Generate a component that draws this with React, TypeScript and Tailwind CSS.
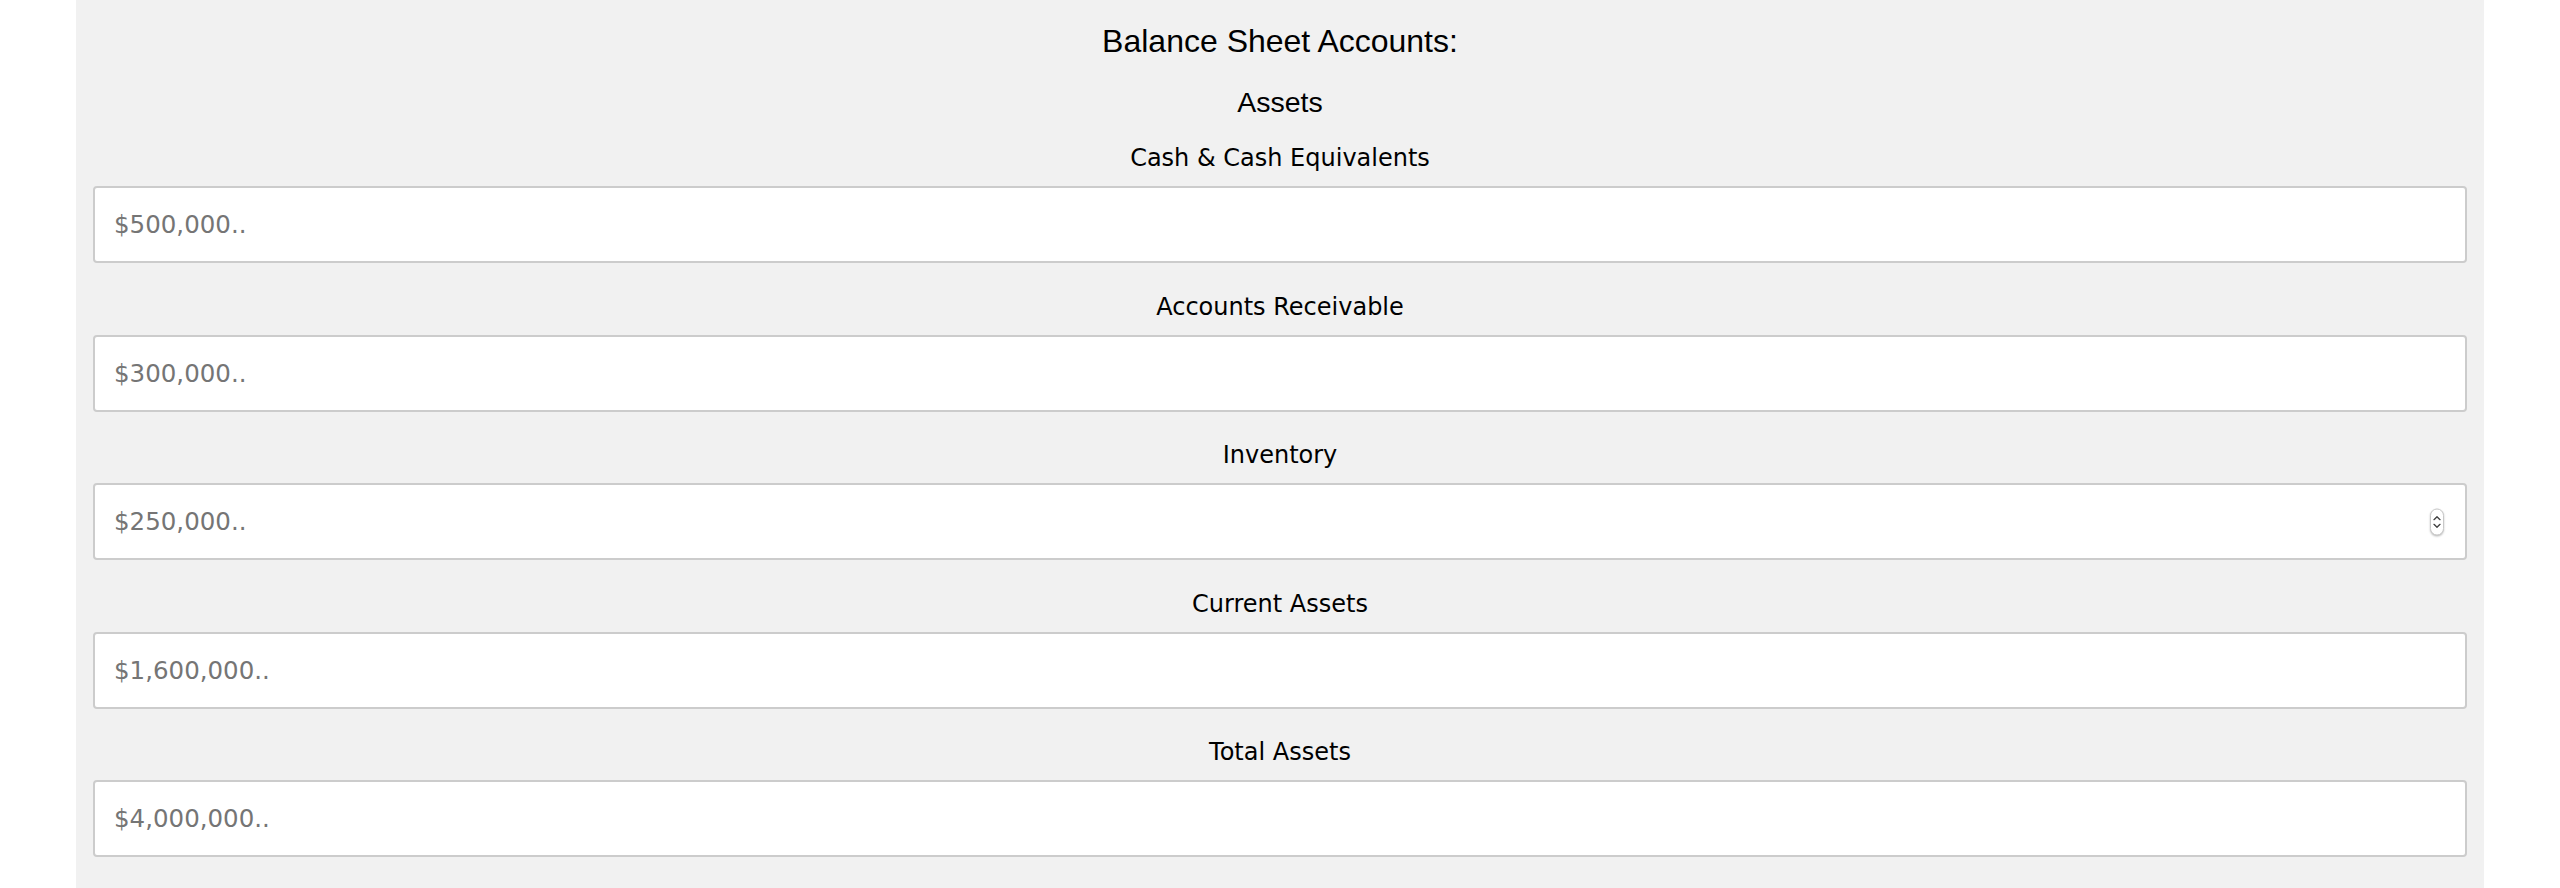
import React from "react";

const fields = [
  { label: "Cash & Cash Equivalents", placeholder: "$500,000..", spinner: false },
  { label: "Accounts Receivable", placeholder: "$300,000..", spinner: false },
  { label: "Inventory", placeholder: "$250,000..", spinner: true },
  { label: "Current Assets", placeholder: "$1,600,000..", spinner: false },
  { label: "Total Assets", placeholder: "$4,000,000..", spinner: false },
];

function Spinner() {
  return (
    <div className="absolute right-[23px] top-1/2 -translate-y-1/2 w-[14px] h-[27px] rounded-full border border-[#c8c8c8] bg-white shadow-[0_1px_2px_rgba(0,0,0,0.25)] flex flex-col items-center justify-center gap-[3px]">
      <svg width="8" height="5" viewBox="0 0 8 5" fill="none">
        <path d="M1 4.2 L4 1.2 L7 4.2" stroke="#444" strokeWidth="1.4" strokeLinecap="round" strokeLinejoin="round" />
      </svg>
      <svg width="8" height="5" viewBox="0 0 8 5" fill="none">
        <path d="M1 0.8 L4 3.8 L7 0.8" stroke="#444" strokeWidth="1.4" strokeLinecap="round" strokeLinejoin="round" />
      </svg>
    </div>
  );
}

export default function App() {
  return (
    <div className="w-full min-h-[888px] bg-white">
      <div className="mx-[76px] min-h-[888px] bg-[#f1f1f1] px-[17px] pt-[23px] pb-[40px]">
        <h2 className="text-center text-[32px] leading-[36px] text-black font-['Liberation_Sans',Arial,sans-serif]">
          Balance Sheet Accounts:
        </h2>
        <h3 className="mt-[27px] text-center text-[28.5px] leading-[32px] text-black font-['Liberation_Sans',Arial,sans-serif]">
          Assets
        </h3>
        <div className="mt-[26px] flex flex-col">
          {fields.map((f, i) => (
            <div key={i} className="flex flex-col mb-[29.5px]">
              <label className="text-center text-[24px] leading-[28px] text-black font-['DejaVu_Sans',Verdana,sans-serif]">
                {f.label}
              </label>
              <div className="relative mt-[14px]">
                <input
                  type="text"
                  placeholder={f.placeholder}
                  className="block w-full h-[77px] border-2 border-[#cccccc] rounded-[4px] bg-white pl-[19px] pr-[19px] text-[24.5px] text-black placeholder:text-[#757575] outline-none font-['DejaVu_Sans',Verdana,sans-serif]"
                />
                {f.spinner && <Spinner />}
              </div>
            </div>
          ))}
        </div>
      </div>
    </div>
  );
}
